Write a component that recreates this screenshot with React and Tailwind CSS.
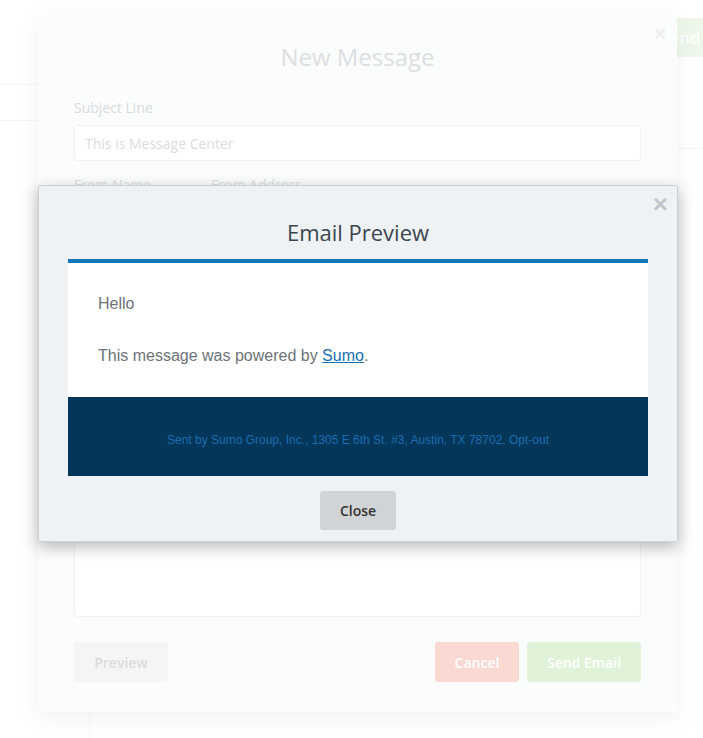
import React from 'react';

const ui = { fontFamily: '"Open Sans", "Noto Sans", sans-serif' };
const mail = { fontFamily: '"Liberation Sans", Arial, sans-serif' };

// Faded "New Message" modal sitting behind the preview
const NewMessageModal = () => (
  <div
    className="absolute left-[38px] top-[15px] w-[639px] h-[697px] bg-[#fbfcfc] rounded-[3px] shadow-[0_6px_24px_rgba(0,0,0,0.06)] px-[36px]"
    style={ui}
  >
    <span className="absolute right-[10px] top-[6px] text-[24px] font-bold leading-none text-[#eceeef]">×</span>
    <h2 className="text-center text-[24px] leading-[32px] pt-[26px] text-[#dcdfe2]">New Message</h2>

    <div className="mt-[25px] text-[14px] leading-[20px] text-[#d8dbdd]">Subject Line</div>
    <div className="mt-[7px] h-[36px] border border-[#eff1f2] bg-white rounded-[3px] px-[10px] flex items-center text-[14px] text-[#d9dcde]">
      This is Message Center
    </div>

    <div className="mt-[14px] flex gap-[60px] text-[14px] leading-[20px] text-[#dadddf]">
      <span>From Name</span>
      <span>From Address</span>
    </div>

    {/* textarea remains (mostly hidden behind the preview) */}
    <div className="mt-[20px] h-[402px] border border-[#f1f2f3] bg-white rounded-[3px]" />

    <div className="mt-[25px] flex items-center text-[14px] font-semibold">
      <div className="w-[94px] h-[40px] rounded-[3px] bg-[#f5f5f5] text-[#dcdcdc] flex items-center justify-center">Preview</div>
      <div className="ml-auto w-[84px] h-[40px] rounded-[3px] bg-[#fad9d3] text-white flex items-center justify-center">Cancel</div>
      <div className="ml-[8px] w-[114px] h-[40px] rounded-[3px] bg-[#e0f3d9] text-white flex items-center justify-center">Send Email</div>
    </div>
  </div>
);

const EmailPreviewModal = () => (
  <div
    className="absolute left-[38px] top-[185px] w-[640px] h-[357px] bg-[#eef2f5] border border-[#cdd1d5] rounded-[2px] shadow-[0_5px_16px_rgba(0,0,0,0.28)] px-[29px]"
    style={ui}
  >
    <span className="absolute right-[9px] top-[5px] text-[26px] font-bold leading-none text-[#c4c7ca]" style={mail}>×</span>
    <h2 className="text-center text-[22px] leading-[30px] pt-[31px] text-[#3b454f]">Email Preview</h2>

    <div className="mt-[12px] w-[580px]">
      <div className="h-[4px] bg-[#1476b8]" />
      <div className="bg-white h-[134px] px-[30px] pt-[29px] text-[16px] leading-[24px] text-[#6d7278]" style={mail}>
        <p>Hello</p>
        <p className="mt-[28px]">
          This message was powered by <span className="text-[#1470b4] underline">Sumo</span>.
        </p>
      </div>
      <div className="bg-[#04365a] h-[79px] pt-[35px] text-center text-[12px] leading-[16px] text-[#1a6db0]" style={mail}>
        Sent by Sumo Group, Inc., 1305 E 6th St. #3, Austin, TX 78702. Opt-out
      </div>
    </div>

    <div className="mt-[15px] flex justify-center">
      <div className="w-[76px] h-[39px] rounded-[3px] bg-[#d1d4d6] text-[#333] text-[14px] font-semibold flex items-center justify-center">
        Close
      </div>
    </div>
  </div>
);

export default function App() {
  return (
    <div className="relative w-[703px] h-[738px] bg-white overflow-hidden">
      {/* faint page behind the overlay */}
      <div className="absolute left-0 top-[84px] w-[40px] border-t border-[#f4f5f5]" />
      <div className="absolute left-0 top-[120px] w-[40px] border-t border-[#f4f5f5]" />
      <div className="absolute right-0 top-[148px] w-[30px] border-t border-[#f6f6f6]" />
      <div className="absolute left-[89px] top-[712px] h-[30px] border-l border-[#f6f6f6]" />
      <div
        className="absolute left-[640px] top-[18px] w-[80px] h-[39px] rounded-[3px] bg-[#eef8ea] text-white text-[17px] font-semibold flex items-center pl-[20px]"
        style={ui}
      >
        Send
      </div>

      <NewMessageModal />
      <EmailPreviewModal />
    </div>
  );
}
